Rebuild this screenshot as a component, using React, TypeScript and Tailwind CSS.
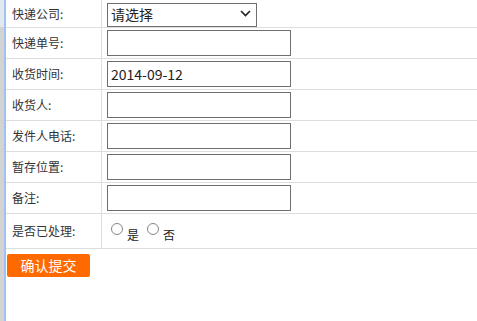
import { useState } from 'react';

const font = { fontFamily: '"Microsoft YaHei", "Noto Sans CJK SC", "Noto Sans", sans-serif' };

const rows = [
  { label: '快递单号:', value: '' },
  { label: '收货时间:', value: '2014-09-12' },
  { label: '收货人:', value: '' },
  { label: '发件人电话:', value: '' },
  { label: '暂存位置:', value: '' },
  { label: '备注:', value: '' },
];

function Radio({ label, checked, onClick }: { label: string; checked: boolean; onClick: () => void }) {
  return (
    <label className="flex items-start cursor-pointer" onClick={onClick}>
      <span className="w-[12px] h-[12px] rounded-full border border-[#858585] bg-white flex items-center justify-center">
        {checked && <span className="w-[6px] h-[6px] rounded-full bg-[#333]" />}
      </span>
      <span className="ml-[4px] mt-[5px] text-[12px] leading-[14px] text-[#222]">{label}</span>
    </label>
  );
}

export default function App() {
  const [handled, setHandled] = useState<string | null>(null);

  return (
    <div className="w-[477px] h-[321px] bg-white flex overflow-hidden" style={font}>
      {/* left frame edge */}
      <div className="w-[4px] flex flex-col">
        <div className="h-[27px] bg-[#e2e8ef]" />
        <div className="flex-1 bg-[#d3d3d3]" />
      </div>
      <div className="w-[2px] bg-[#9fc2ee]" />

      <div className="flex-1 flex flex-col">
        <div className="flex flex-col">
          <div className="flex h-[28px] border-b border-[#dedede]">
            <div className="w-[96px] pl-[6px] border-r border-[#dedede] flex items-center text-[12px] text-[#333]">
              快递公司:
            </div>
            <div className="flex-1 pl-[5px] pt-[1px]">
              <div className="relative w-[150px] h-[24px]">
                <select className="appearance-none w-full h-full border border-[#6f6f6f] bg-white pl-[3px] text-[14px] text-[#222] outline-none" style={font}>
                  <option>请选择</option>
                </select>
                <svg className="absolute right-[6px] top-[9px] pointer-events-none" width="11" height="7" viewBox="0 0 11 7">
                  <path d="M1 1 L5.5 5.5 L10 1" fill="none" stroke="#222" strokeWidth="1.6" />
                </svg>
              </div>
            </div>
          </div>

          {rows.map((r) => (
            <div key={r.label} className="flex h-[31px] border-b border-[#dedede]">
              <div className="w-[96px] pl-[6px] border-r border-[#dedede] flex items-center text-[12px] text-[#333]">
                {r.label}
              </div>
              <div className="flex-1 pl-[5px] flex items-center">
                <input
                  defaultValue={r.value}
                  className="w-[184px] h-[26px] border border-[#6f6f6f] bg-white px-[3px] text-[14px] text-[#222] outline-none"
                  style={font}
                />
              </div>
            </div>
          ))}

          <div className="flex h-[35px] border-b border-[#dedede]">
            <div className="w-[96px] pl-[6px] border-r border-[#dedede] flex items-center text-[12px] text-[#333]">
              是否已处理:
            </div>
            <div className="flex-1 pl-[9px] pt-[9px] flex gap-[8px]">
              <Radio label="是" checked={handled === 'y'} onClick={() => setHandled('y')} />
              <Radio label="否" checked={handled === 'n'} onClick={() => setHandled('n')} />
            </div>
          </div>
        </div>

        <div className="pt-[3px] pl-[1px]">
          <button className="w-[83px] h-[23px] rounded-[2px] bg-[#ff6a00] text-white text-[14px] leading-[23px]" style={font}>
            确认提交
          </button>
        </div>
      </div>
    </div>
  );
}
